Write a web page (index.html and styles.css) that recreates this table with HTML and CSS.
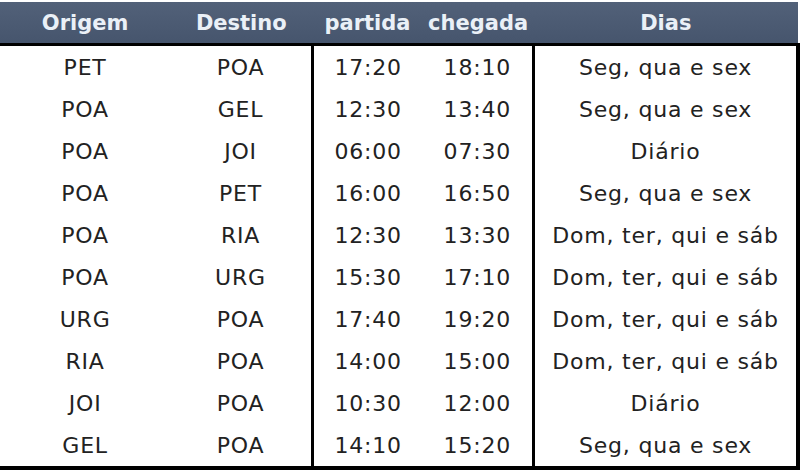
FILE: index.html
```html
<!DOCTYPE html>
<html>
<head>
<meta charset="utf-8">
<link rel="stylesheet" href="styles.css">
</head>
<body>
<table class="voos">
  <thead>
    <tr>
      <th class="c-or">Origem</th>
      <th class="c-de">Destino</th>
      <th class="c-pa">partida</th>
      <th class="c-ch">chegada</th>
      <th class="c-di">Dias</th>
    </tr>
  </thead>
  <tbody>
    <tr><td>PET</td><td>POA</td><td class="c-pa">17:20</td><td class="c-ch">18:10</td><td class="c-di">Seg, qua e sex</td></tr>
    <tr><td>POA</td><td>GEL</td><td class="c-pa">12:30</td><td class="c-ch">13:40</td><td class="c-di">Seg, qua e sex</td></tr>
    <tr><td>POA</td><td>JOI</td><td class="c-pa">06:00</td><td class="c-ch">07:30</td><td class="c-di">Diário</td></tr>
    <tr><td>POA</td><td>PET</td><td class="c-pa">16:00</td><td class="c-ch">16:50</td><td class="c-di">Seg, qua e sex</td></tr>
    <tr><td>POA</td><td>RIA</td><td class="c-pa">12:30</td><td class="c-ch">13:30</td><td class="c-di">Dom, ter, qui e sáb</td></tr>
    <tr><td>POA</td><td>URG</td><td class="c-pa">15:30</td><td class="c-ch">17:10</td><td class="c-di">Dom, ter, qui e sáb</td></tr>
    <tr><td>URG</td><td>POA</td><td class="c-pa">17:40</td><td class="c-ch">19:20</td><td class="c-di">Dom, ter, qui e sáb</td></tr>
    <tr><td>RIA</td><td>POA</td><td class="c-pa">14:00</td><td class="c-ch">15:00</td><td class="c-di">Dom, ter, qui e sáb</td></tr>
    <tr><td>JOI</td><td>POA</td><td class="c-pa">10:30</td><td class="c-ch">12:00</td><td class="c-di">Diário</td></tr>
    <tr><td>GEL</td><td>POA</td><td class="c-pa">14:10</td><td class="c-ch">15:20</td><td class="c-di">Seg, qua e sex</td></tr>
  </tbody>
</table>
</body>
</html>
```
FILE: styles.css
```css
html, body {
  margin: 0;
  padding: 0;
  background: #ffffff;
}
body {
  padding-top: 2px;
}
.voos {
  border-collapse: collapse;
  table-layout: fixed;
  width: 800px;
  font-family: "DejaVu Sans", sans-serif;
  color: #222222;
}
.voos thead th {
  background: linear-gradient(#526179, #46556d);
  color: #eaf0f7;
  font-weight: bold;
  font-size: 21px;
  height: 41px;
  padding: 0;
  text-align: center;
  border-bottom: 3px solid #000;
}
.voos td {
  height: 42px;
  padding: 0;
  font-size: 22px;
  letter-spacing: 0.8px;
  text-align: center;
}
.voos tbody tr:last-child td {
  border-bottom: 4px solid #000;
}
.c-or { width: 170px; }
.c-de { width: 142px; }
.c-pa { width: 110px; }
.c-ch { width: 111px; }
.c-di { width: 264px; }
.voos td.c-pa { border-left: 3px solid #000; }
.voos td.c-di { border-left: 3px solid #000; border-right: 4px solid #000; }
```
